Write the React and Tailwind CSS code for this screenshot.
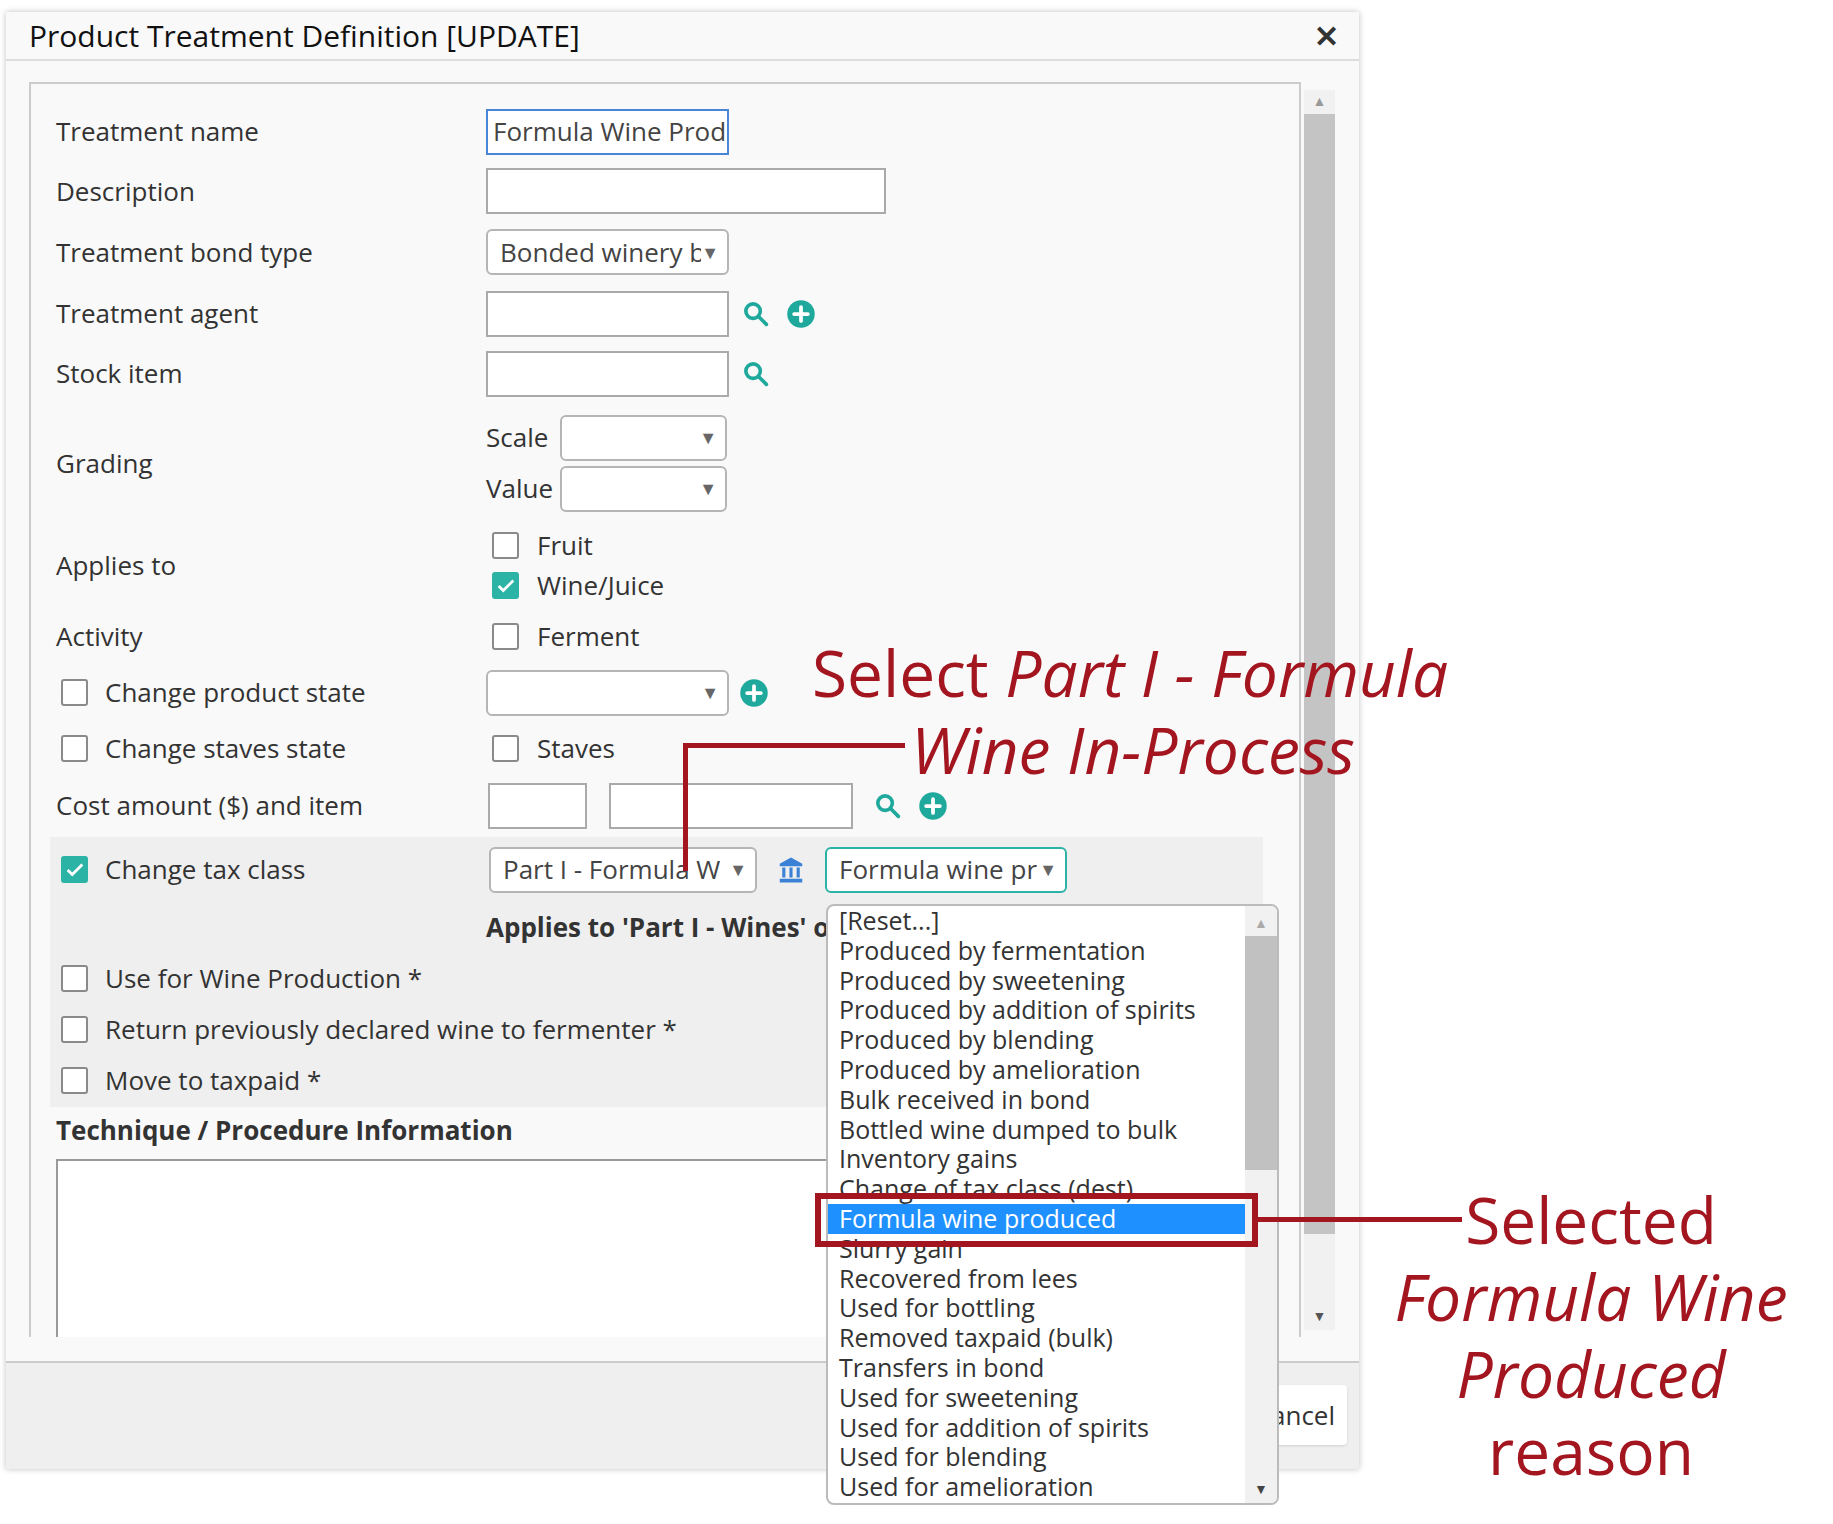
import React from "react"

const teal = "#1fa99c"

const Box = ({ checked }) => (
  <span
    className={`inline-flex items-center justify-center w-[27px] h-[27px] rounded-[3px] border-2 ${
      checked ? "bg-[#2bb3a6] border-[#2bb3a6]" : "bg-white border-[#8a8a8a]"
    }`}
  >
    {checked && (
      <svg viewBox="0 0 24 24" className="w-[22px] h-[22px]" fill="none" stroke="white" strokeWidth="3">
        <path d="M4 12l5 5L20 6" />
      </svg>
    )}
  </span>
)

const Search = () => (
  <svg viewBox="0 0 24 24" className="w-[29px] h-[29px]" fill="none" stroke={teal} strokeWidth="3" strokeLinecap="round">
    <circle cx="10" cy="10" r="6" />
    <path d="M14.5 14.5L21 21" />
  </svg>
)

const Plus = () => (
  <svg viewBox="0 0 24 24" className="w-[30px] h-[30px]">
    <circle cx="12" cy="12" r="11" fill={teal} />
    <path d="M12 6.5v11M6.5 12h11" stroke="white" strokeWidth="3" strokeLinecap="round" />
  </svg>
)

const Select = ({ w, text, focus }) => (
  <div
    className={`${w} h-[46px] flex items-center justify-between rounded-[6px] bg-white pl-[12px] pr-[8px] border-2 ${
      focus ? "border-[#2bb3a6]" : "border-[#b5b5b5]"
    }`}
  >
    <span className="whitespace-nowrap overflow-hidden text-[#444]">{text}</span>
    <span className="text-[#666] text-[18px]">▼</span>
  </div>
)

const Input = ({ w, children, blue }) => (
  <div className={`${w} h-[46px] bg-white border-2 ${blue ? "border-[#4a86d8]" : "border-[#aaa]"} flex items-center pl-[5px] overflow-hidden whitespace-nowrap text-[#444]`}>
    {children}
  </div>
)

const Row = ({ h, label, children }) => (
  <div className={`flex items-center ${h} pl-[6px]`}>
    <div className="w-[430px] shrink-0">{label}</div>
    <div className="flex items-center gap-[20px]">{children}</div>
  </div>
)

const items = [
  "[Reset...]",
  "Produced by fermentation",
  "Produced by sweetening",
  "Produced by addition of spirits",
  "Produced by blending",
  "Produced by amelioration",
  "Bulk received in bond",
  "Bottled wine dumped to bulk",
  "Inventory gains",
  "Change of tax class (dest)",
  "Formula wine produced",
  "Slurry gain",
  "Recovered from lees",
  "Used for bottling",
  "Removed taxpaid (bulk)",
  "Transfers in bond",
  "Used for sweetening",
  "Used for addition of spirits",
  "Used for blending",
  "Used for amelioration",
]

export default function App() {
  return (
    <div className="relative w-[1833px] h-[1524px] bg-white overflow-hidden text-[26px] text-[#333]" style={{ fontFamily: "'Open Sans', sans-serif" }}>
      {/* dialog */}
      <div className="absolute left-[6px] top-[12px] w-[1353px] h-[1457px] bg-[#f9f9f9] shadow-[0_0_6px_rgba(0,0,0,0.25)] flex flex-col">
        <div className="h-[49px] flex items-center justify-between pl-[23px] pr-[20px] border-b-2 border-[#ddd]">
          <span className="text-[30px] text-[#111]">Product Treatment Definition [UPDATE]</span>
          <span className="text-[30px] font-bold text-[#333]">✕</span>
        </div>
        <div className="flex pl-[23px] pt-[21px] pr-[24px]">
          <div className="w-[1272px] h-[1255px] border-2 border-[#ccc] border-b-0 overflow-hidden pl-[19px] pr-[36px] pt-[18px]">
            <Row h="h-[59px]" label="Treatment name">
              <Input w="w-[243px]" blue>Formula Wine Prod</Input>
            </Row>
            <Row h="h-[60px]" label="Description">
              <Input w="w-[400px]" />
            </Row>
            <Row h="h-[62px]" label="Treatment bond type">
              <Select w="w-[243px]" text="Bonded winery b" />
            </Row>
            <Row h="h-[61px]" label="Treatment agent">
              <Input w="w-[243px]" />
              <div className="flex items-center gap-[16px] -ml-[8px]"><Search /><Plus /></div>
            </Row>
            <Row h="h-[59px]" label="Stock item">
              <Input w="w-[243px]" />
              <div className="-ml-[8px]"><Search /></div>
            </Row>
            <div className="flex items-center h-[120px] pl-[6px]">
              <div className="w-[430px] shrink-0">Grading</div>
              <div className="flex flex-col">
                {["Scale", "Value"].map((l) => (
                  <div key={l} className="h-[51px] flex items-center">
                    <span className="w-[74px]">{l}</span>
                    <Select w="w-[167px]" text="" />
                  </div>
                ))}
              </div>
            </div>
            <div className="flex items-center h-[85px] pl-[6px]">
              <div className="w-[430px] shrink-0">Applies to</div>
              <div className="flex flex-col pl-[6px]">
                <div className="h-[40px] flex items-center gap-[18px]"><Box /> Fruit</div>
                <div className="h-[40px] flex items-center gap-[18px]"><Box checked /> Wine/Juice</div>
              </div>
            </div>
            <div className="flex items-center h-[57px] pl-[6px]">
              <div className="w-[430px] shrink-0">Activity</div>
              <div className="flex items-center gap-[18px] pl-[6px]"><Box /> Ferment</div>
            </div>
            <div className="flex items-center h-[55px] pl-[11px]">
              <div className="w-[425px] shrink-0 flex items-center gap-[17px]"><Box /> Change product state</div>
              <Select w="w-[243px]" text="" />
              <div className="ml-[10px]"><Plus /></div>
            </div>
            <div className="flex items-center h-[57px] pl-[11px]">
              <div className="w-[425px] shrink-0 flex items-center gap-[17px]"><Box /> Change staves state</div>
              <div className="flex items-center gap-[18px] pl-[6px]"><Box /> Staves</div>
            </div>
            <div className="flex items-center h-[57px] pl-[6px]">
              <div className="w-[432px] shrink-0 whitespace-nowrap">Cost amount ($) and item</div>
              <Input w="w-[99px]" />
              <div className="ml-[22px]"><Input w="w-[244px]" /></div>
              <div className="flex items-center gap-[16px] ml-[20px]"><Search /><Plus /></div>
            </div>
            <div className="bg-[#efefef] h-[270px] mt-[3px] pl-[11px]">
              <div className="flex items-center h-[65px]">
                <div className="w-[428px] shrink-0 flex items-center gap-[17px]"><Box checked /> Change tax class</div>
                <Select w="w-[268px]" text="Part I - Formula W" />
                <svg viewBox="0 0 24 24" className="w-[30px] h-[30px] ml-[19px]" fill="#3b82d6">
                  <path d="M12 2L3 7v2h18V7zM5 10h2.5v8H5zM10.75 10h2.5v8h-2.5zM16.5 10H19v8h-2.5zM3 19h18v3H3z" />
                </svg>
                <div className="ml-[19px]"><Select w="w-[242px]" text="Formula wine pr" focus /></div>
              </div>
              <div className="h-[51px] flex items-center pl-[425px] font-bold whitespace-nowrap">Applies to 'Part I - Wines' of</div>
              <div className="h-[50px] flex items-center gap-[17px]"><Box /> Use for Wine Production *</div>
              <div className="h-[52px] flex items-center gap-[17px]"><Box /> Return previously declared wine to fermenter *</div>
              <div className="h-[51px] flex items-center gap-[17px]"><Box /> Move to taxpaid *</div>
            </div>
            <div className="h-[46px] flex items-center pl-[6px] font-bold">Technique / Procedure Information</div>
            <div className="ml-[6px] h-[200px] bg-white border-2 border-[#999] mt-[6px]" />
          </div>
          <div className="w-[31px] h-[1240px] mt-[8px] ml-[3px] bg-[#f1f1f1] flex flex-col items-center">
            <span className="text-[#999] text-[14px] h-[24px]">▲</span>
            <div className="w-full h-[1120px] bg-[#c4c4c4]" />
            <span className="text-[#555] text-[14px] mt-auto mb-[4px]">▼</span>
          </div>
        </div>
        <div className="mt-auto h-[108px] border-t-2 border-[#ccc] bg-[#efefef] flex justify-end items-start pt-[22px] pr-[12px]">
          <div className="w-[120px] h-[60px] bg-white rounded-[4px] shadow flex items-center justify-end pr-[12px]">Cancel</div>
        </div>
      </div>

      {/* dropdown list */}
      <div className="absolute left-[826px] top-[904px] w-[453px] h-[601px] bg-white border-2 border-[#bbb] rounded-[8px] overflow-hidden flex">
        <div className="flex-1 text-[#333] text-[25px] leading-[29.8px]">
          {items.map((t) => (
            <div key={t} className={`pl-[11px] whitespace-nowrap ${t === "Formula wine produced" ? "bg-[#1e90ff] text-white" : ""}`}>{t}</div>
          ))}
        </div>
        <div className="w-[32px] bg-[#f1f1f1] flex flex-col items-center">
          <span className="text-[#aaa] text-[14px] h-[30px] pt-[6px]">▲</span>
          <div className="w-full h-[234px] bg-[#c1c1c1]" />
          <span className="text-[#444] text-[14px] mt-auto mb-[4px]">▼</span>
        </div>
      </div>

      {/* annotations */}
      <div className="absolute left-[683px] top-[743px] w-[5px] h-[128px] bg-[#a3151f]" />
      <div className="absolute left-[683px] top-[743px] w-[222px] h-[5px] bg-[#a3151f]" />
      <div className="absolute left-[812px] top-[633px] text-[64px] leading-[80px] text-[#a3151f] whitespace-nowrap">
        Select <i>Part I - Formula</i>
      </div>
      <div className="absolute left-[911px] top-[710px] text-[64px] leading-[80px] text-[#a3151f] italic whitespace-nowrap">Wine In-Process</div>

      <div className="absolute left-[815px] top-[1193px] w-[443px] h-[54px] border-[6px] border-[#a3151f]" />
      <div className="absolute left-[1257px] top-[1217px] w-[205px] h-[5px] bg-[#a3151f]" />
      <div className="absolute left-[1356px] top-[1181px] w-[470px] text-center text-[64px] leading-[77px] text-[#a3151f]">
        <div>Selected</div>
        <div className="italic">Formula Wine</div>
        <div className="italic">Produced</div>
        <div>reason</div>
      </div>
    </div>
  )
}
